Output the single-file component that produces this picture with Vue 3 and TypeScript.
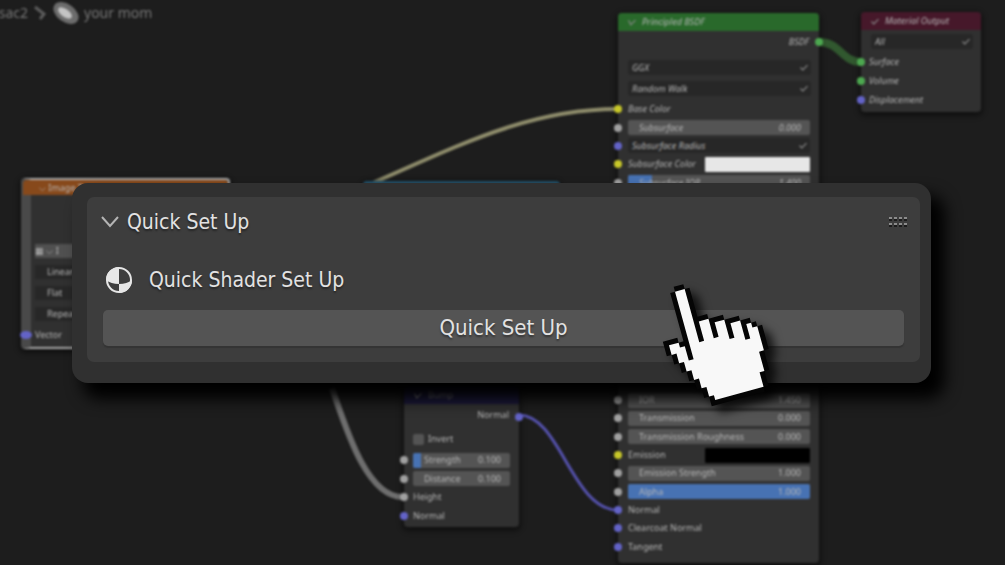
<script setup lang="ts">
import { ref } from 'vue'

type Kind = 'slider' | 'plain' | 'expand' | 'color'
interface Row {
  id: string
  label: string
  kind: Kind
  socket: string
  value?: string
  fill?: number
}

const upper = ref<Row[]>([
  { id: 'base', label: 'Base Color', kind: 'plain', socket: 'yellow' },
  { id: 'sub', label: 'Subsurface', kind: 'slider', socket: 'grey', value: '0.000', fill: 0 },
  { id: 'radius', label: 'Subsurface Radius', kind: 'expand', socket: 'violet' },
  { id: 'subcol', label: 'Subsurface Color', kind: 'color', socket: 'yellow', value: '#e7e7e7' },
  { id: 'subior', label: 'Subsurface IOR', kind: 'slider', socket: 'grey', value: '1.400', fill: 13 },
])

const lower = ref<Row[]>([
  { id: 'ior', label: 'IOR', kind: 'slider', socket: 'grey', value: '1.450', fill: 0 },
  { id: 'trans', label: 'Transmission', kind: 'slider', socket: 'grey', value: '0.000', fill: 0 },
  { id: 'transr', label: 'Transmission Roughness', kind: 'slider', socket: 'grey', value: '0.000', fill: 0 },
  { id: 'emis', label: 'Emission', kind: 'color', socket: 'yellow', value: '#000000' },
  { id: 'emiss', label: 'Emission Strength', kind: 'slider', socket: 'grey', value: '1.000', fill: 0 },
  { id: 'alpha', label: 'Alpha', kind: 'slider', socket: 'grey', value: '1.000', fill: 100 },
  { id: 'norm', label: 'Normal', kind: 'plain', socket: 'violet' },
  { id: 'coat', label: 'Clearcoat Normal', kind: 'plain', socket: 'violet' },
  { id: 'tan', label: 'Tangent', kind: 'plain', socket: 'violet' },
])

const groups = [
  { name: 'upper', rows: upper.value },
  { name: 'lower', rows: lower.value },
]

const bump = ref<Row[]>([
  { id: 'strength', label: 'Strength', kind: 'slider', socket: 'grey', value: '0.100', fill: 8 },
  { id: 'distance', label: 'Distance', kind: 'slider', socket: 'grey', value: '0.100', fill: 0 },
  { id: 'height', label: 'Height', kind: 'plain', socket: 'grey' },
  { id: 'bnormal', label: 'Normal', kind: 'plain', socket: 'violet' },
])

const invert = ref(false)
const dots = [0, 1, 2, 3]
</script>

<template>
  <main class="editor">
    <div class="canvas">
      <svg class="wires" width="1005" height="565" viewBox="0 0 1005 565" fill="none">
        <path d="M345 195C445 153 520 109 618 109" stroke="#8f8d6c" stroke-width="4" />
        <path d="M332 388C346 428 366 496 402 497" stroke="#6e6e6e" stroke-width="6" />
        <path d="M519 415C560 415 572 510 618 510" stroke="#5552ad" stroke-width="3" />
        <path d="M819 42C840 42 842 62 861 62" stroke="#31582f" stroke-width="8" />
      </svg>

      <nav class="crumbs">
        <span>sac2</span>
        <svg width="16" height="16" viewBox="0 0 16 16" fill="none" stroke="#5c5c5c" stroke-width="3"><path d="M3 2L12 9L8 14" /></svg>
        <svg width="28" height="24" viewBox="0 0 28 24"><ellipse cx="14" cy="12" rx="14" ry="9" transform="rotate(35 14 12)" fill="#6c6c6c" /><ellipse cx="13" cy="12" rx="8" ry="4" transform="rotate(35 13 12)" fill="#c4c4c4" /></svg>
        <span>your mom</span>
      </nav>

      <section class="node image">
        <header class="orange">⌵ Image Texture</header>
        <div class="image-body">
          <span class="thumb">▦ ⌵ I</span>
          <span class="field">Linear</span>
          <span class="field">Flat</span>
          <span class="field">Repeat</span>
          <span class="vector">Vector<i class="socket violet"></i></span>
        </div>
      </section>

      <div class="node teal"></div>

      <section class="node principled">
        <header class="green">
          <svg class="chev" viewBox="0 0 8 6"><path d="M1 1L3 5L7 1" /></svg>Principled BSDF
        </header>
        <div class="out">BSDF<i class="socket right lime"></i></div>
        <div class="pick">
          <select aria-label="GGX"><option>GGX</option></select>
          <svg class="chev" viewBox="0 0 8 6"><path d="M1 3L3 5L7 1" /></svg>
        </div>
        <div class="pick">
          <select aria-label="Random Walk"><option>Random Walk</option></select>
          <svg class="chev" viewBox="0 0 8 6"><path d="M1 3L3 5L7 1" /></svg>
        </div>
        <div v-for="g in groups" :key="g.name" class="rows" :class="g.name">
          <div v-for="r in g.rows" :key="r.id" class="row">
            <i class="socket" :class="r.socket"></i>
            <div v-if="r.kind === 'slider'" class="slider">
              <span class="fill" :style="{ width: r.fill + '%' }"></span>
              <label :for="r.id">{{ r.label }}</label>
              <input :id="r.id" v-model="r.value" type="text" />
            </div>
            <button v-else-if="r.kind === 'expand'" class="expand" type="button">
              {{ r.label }}<svg class="chev" viewBox="0 0 8 6"><path d="M1 3L3 5L7 1" /></svg>
            </button>
            <template v-else-if="r.kind === 'color'">
              <label :for="r.id">{{ r.label }}</label>
              <input :id="r.id" v-model="r.value" class="swatch" type="color" />
            </template>
            <span v-else>{{ r.label }}</span>
          </div>
        </div>
      </section>

      <section class="node output">
        <header class="maroon">
          <svg class="chev" viewBox="0 0 8 6"><path d="M1 3L3 5L7 1" /></svg>Material Output
        </header>
        <div class="pick">
          <select aria-label="All"><option>All</option></select>
          <svg class="chev" viewBox="0 0 8 6"><path d="M1 3L3 5L7 1" /></svg>
        </div>
        <div class="ins">
          <span class="row"><i class="socket lime"></i>Surface</span>
          <span class="row"><i class="socket lime"></i>Volume</span>
          <span class="row"><i class="socket violet"></i>Displacement</span>
        </div>
      </section>

      <section class="node bump">
        <header class="navy">
          <svg class="chev" viewBox="0 0 8 6"><path d="M1 1L3 5L7 1" /></svg>Bump
        </header>
        <div class="out">Normal<i class="socket right violet"></i></div>
        <label class="check"><input v-model="invert" type="checkbox" />Invert</label>
        <div class="rows bump-rows">
          <div v-for="r in bump" :key="r.id" class="row">
            <i class="socket" :class="r.socket"></i>
            <div v-if="r.kind === 'slider'" class="slider">
              <span class="fill" :style="{ width: r.fill + '%' }"></span>
              <label :for="r.id">{{ r.label }}</label>
              <input :id="r.id" v-model="r.value" type="text" />
            </div>
            <span v-else>{{ r.label }}</span>
          </div>
        </div>
      </section>
    </div>

    <section class="panel">
      <div class="card">
        <header class="title">
          <svg width="18" height="12" viewBox="0 0 18 12" fill="none" stroke="#b4b4b4" stroke-width="2"><path d="M1 1L9 10L17 1" /></svg>
          <h1>Quick Set Up</h1>
          <svg class="grip" width="20" height="12" viewBox="0 0 20 12">
            <g v-for="d in dots" :key="d">
              <rect :x="d * 5 + 1" y="1" width="3" height="2" fill="#8c8c8c" />
              <rect :x="d * 5 + 1" y="3" width="3" height="2" fill="#1c1c1c" />
              <rect :x="d * 5 + 1" y="7" width="3" height="2" fill="#8c8c8c" />
              <rect :x="d * 5 + 1" y="9" width="3" height="2" fill="#1c1c1c" />
            </g>
          </svg>
        </header>
        <div class="shader">
          <svg width="28" height="28" viewBox="0 0 28 28">
            <circle cx="14" cy="14" r="12" fill="#3d3d3d" stroke="#e6e6e6" stroke-width="2" />
            <path d="M14 1A13 13 0 0 0 1 14Q6 18 14 18Z" fill="#e6e6e6" />
            <path d="M14 18Q22 18 27 14A13 13 0 0 1 14 27Z" fill="#e6e6e6" />
          </svg>
          <p>Quick Shader Set Up</p>
        </div>
        <button class="run" type="button">Quick Set Up</button>
      </div>
      <svg class="hand" width="160" height="150" viewBox="0 0 160 150">
        <g transform="matrix(4.83 -1.33 1.33 4.83 35 21.67)">
          <path fill="#050505" d="M0-1H2V0H3V6H5V7H8V8H11V9H13V10H14V11H15V16H14V20H13V23H12V24H1V22H0V20H-1V18H-2V16H-3V14H-4V12H-5V9H-2V10H-1V0H0Z" />
          <path fill="#f8f8f8" d="M0 0H2V11H3V7H5V11H6V8H8V12H9V9H11V13H12V10H13V11H14V16H13V20H12V23H2V22H1V20H0V18H-1V16H-2V14H-3V12H-4V10H-2V11H-1V14H0Z" />
        </g>
      </svg>
    </section>
  </main>
</template>

<style>
body {
  margin: 0;
  background: #1d1d1d;
}
</style>

<style scoped>
* {
  box-sizing: border-box;
}
.editor {
  position: relative;
  min-height: 100vh;
  padding: 183px 74px 0 72px;
  overflow: hidden;
  background: #1d1d1d;
  color: #e2e2e2;
  font-family: 'Noto Sans', 'Open Sans', sans-serif;
}
.canvas {
  position: absolute;
  inset: 0;
  filter: blur(1px);
  font-size: 9px;
  line-height: 14px;
  color: #b8b8b8;
}
.wires {
  position: absolute;
  left: 0;
  top: 0;
}
.crumbs {
  position: absolute;
  left: 0;
  top: 0;
  display: flex;
  align-items: center;
  gap: 4px;
  height: 26px;
  font-size: 14px;
  color: #777;
}
.crumbs span:first-child {
  width: 28px;
  direction: rtl;
}
.node {
  position: absolute;
  background: #303030;
  border-radius: 4px;
  box-shadow: 0 2px 5px 2px rgba(0, 0, 0, 0.45);
}
.node header {
  display: flex;
  align-items: center;
  gap: 5px;
  height: 18px;
  padding-left: 9px;
  border-radius: 4px 4px 0 0;
}
.chev {
  flex: none;
  width: 10px;
  height: 7px;
  fill: none;
  stroke: #888;
}
.green {
  background: #29692b;
}
.maroon {
  background: #46182a;
}
.navy {
  background: #1c1a3c;
  color: #777;
}
.orange {
  background: #87491b;
}
.principled {
  left: 618px;
  top: 13px;
  width: 201px;
  height: 550px;
  font-style: italic;
}
.output {
  left: 861px;
  top: 12px;
  width: 120px;
  height: 100px;
  font-style: italic;
}
.bump {
  left: 404px;
  top: 386px;
  width: 115px;
  height: 141px;
}
.image {
  left: 21px;
  top: 178px;
  width: 209px;
  height: 171px;
  border: 2px solid #aaa;
  border-left: 10px solid #494949;
}
.image header {
  height: 15px;
  margin-left: -8px;
  padding-left: 16px;
}
.teal {
  left: 363px;
  top: 181px;
  width: 197px;
  height: 40px;
  background: #245067;
}
.image-body {
  display: flex;
  flex-direction: column;
  gap: 7px;
  padding: 49px 4px 0;
}
.thumb {
  background: #505050;
}
.field {
  padding-left: 12px;
  background: #272727;
}
.vector {
  position: relative;
}
.vector .socket {
  left: -15px;
  width: 12px;
}
.out {
  position: relative;
  height: 22px;
  padding: 4px 10px 0 0;
  text-align: right;
}
.pick {
  position: relative;
  height: 15px;
  margin: 6px 8px 6px 10px;
  background: #272727;
  border-radius: 3px;
}
.out + .pick {
  margin-top: 7px;
}
.pick select {
  display: block;
  width: 100%;
  height: 15px;
  padding: 0 4px;
  border: 0;
  appearance: none;
  background: transparent;
  color: inherit;
  font: inherit;
}
.pick .chev {
  position: absolute;
  right: 2px;
  top: 4px;
}
.rows {
  display: grid;
  grid-auto-rows: 1fr;
}
.upper {
  height: 92px;
  margin-top: 4px;
}
.pick + .upper {
  margin-top: -2px;
}
.lower {
  height: 165px;
  margin-top: 199px;
  font-style: normal;
}
.row {
  position: relative;
  display: flex;
  align-items: center;
  padding: 0 9px 0 10px;
}
.socket {
  position: absolute;
  left: -4px;
  top: calc(50% - 4px);
  width: 8px;
  height: 8px;
  border-radius: 50%;
}
.socket.right {
  left: auto;
  right: -4px;
}
.yellow {
  background: #c7c729;
}
.grey {
  background: #a1a1a1;
}
.violet {
  background: #6363c7;
}
.lime {
  background: #4da850;
}
.slider {
  position: relative;
  display: flex;
  flex: 1;
  align-items: center;
  min-width: 0;
  height: 15px;
  padding: 0 9px;
  overflow: hidden;
  background: #545454;
  border-radius: 2px;
}
.fill {
  position: absolute;
  inset: 0 auto 0 0;
  background: #4772b3;
}
.slider label {
  position: relative;
  flex: 1;
  white-space: nowrap;
  padding-left: 2px;
}
.slider input {
  position: relative;
  width: 30px;
  padding: 0;
  border: 0;
  background: transparent;
  color: inherit;
  font: inherit;
  text-align: right;
}
.expand {
  display: flex;
  flex: 1;
  align-items: center;
  justify-content: space-between;
  height: 15px;
  padding: 0 2px 0 4px;
  border: 0;
  border-radius: 3px;
  background: #272727;
  color: inherit;
  font: inherit;
}
.swatch {
  width: 105px;
  height: 15px;
  margin-left: auto;
  padding: 0;
  border: 0;
  appearance: none;
  background: transparent;
}
.swatch::-webkit-color-swatch-wrapper {
  padding: 0;
}
.swatch::-webkit-color-swatch {
  border: 0;
  border-radius: 1px;
}
.ins {
  display: grid;
  grid-auto-rows: 19px;
}
.ins .row {
  padding-left: 8px;
}
.output .pick {
  margin: 4px 8px 3px 10px;
}
.bump .out {
  height: 26px;
}
.check {
  display: flex;
  align-items: center;
  gap: 4px;
  margin: 2px 9px 4px;
}
.check input {
  width: 11px;
  height: 11px;
  margin: 0;
  appearance: none;
  border-radius: 2px;
  background: #545454;
}
.bump-rows {
  height: 74px;
  margin-top: 5px;
}
.bump .row {
  padding-left: 9px;
}
.panel {
  position: relative;
  padding: 14px 11px 21px 15px;
  border-radius: 16px;
  background: #303030;
  box-shadow: 12px 14px 16px 2px #000;
  font-family: 'DejaVu Sans Condensed', 'DejaVu Sans', sans-serif;
}
.card {
  padding: 8px 16px 16px;
  border-radius: 7px;
  background: #3d3d3d;
}
.title {
  display: flex;
  align-items: center;
  gap: 8px;
  height: 34px;
  margin-left: -2px;
}
.title h1,
.shader p {
  margin: 0;
  font-size: 21px;
  line-height: 30px;
  font-weight: 400;
  text-shadow: 0 2px 2px rgba(0, 0, 0, 0.4);
}
.grip {
  margin-left: auto;
  margin-right: -4px;
}
.shader {
  display: flex;
  align-items: center;
  gap: 16px;
  padding: 26px 0 15px 2px;
}
.run {
  display: block;
  width: 100%;
  height: 36px;
  padding: 0;
  border: 0;
  border-radius: 5px;
  background: #545454;
  box-shadow: 0 2px 1px #343434;
  color: inherit;
  font: inherit;
  font-size: 22px;
  line-height: 34px;
  text-shadow: 0 2px 2px rgba(0, 0, 0, 0.4);
}
.hand {
  position: absolute;
  right: 131px;
  top: 87px;
  filter: drop-shadow(8px 7px 5px rgba(0, 0, 0, 0.75));
}
</style>
